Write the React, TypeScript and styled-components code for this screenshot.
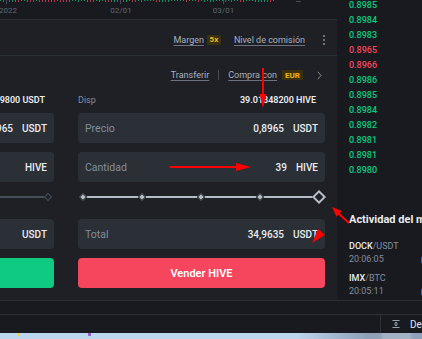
import React from "react";
import styled, { createGlobalStyle } from "styled-components";

const GlobalStyle = createGlobalStyle`
  html, body { margin: 0; padding: 0; background: #181a20; }
  body { font-family: Roboto, "Liberation Sans", Arial, sans-serif; }
  * { box-sizing: border-box; }
`;

const Page = styled.div`
  position: relative;
  width: 422px;
  height: 339px;
  overflow: hidden;
  background: #181a20;
  color: #eaecef;
  display: flex;
  flex-direction: column;
`;

const Main = styled.div`
  display: flex;
  height: 300px;
  flex-shrink: 0;
`;

const LeftCol = styled.div`
  width: 337px;
  flex-shrink: 0;
  display: flex;
  flex-direction: column;
`;

const Axis = styled.div`
  height: 20px;
  border-bottom: 1px solid #2b2f36;
  background: #181a20;
  svg { display: block; }
`;

const Header = styled.div`
  height: 36px;
  border-bottom: 1px solid #2b2f36;
  background: #1e2026;
  display: flex;
  align-items: center;
  justify-content: flex-end;
  padding: 4px 12px 0 0;
  font-size: 9px;
`;

const LinkText = styled.span<{ $gap?: number }>`
  color: #aab0bb;
  text-decoration: underline;
  text-decoration-color: #6b7280;
  text-underline-offset: 2px;
  line-height: 12px;
  white-space: nowrap;
  margin-right: ${(p) => p.$gap ?? 0}px;
`;

const Badge = styled.span<{ $w: number; $gap?: number }>`
  display: inline-flex;
  align-items: center;
  justify-content: center;
  width: ${(p) => p.$w}px;
  height: 10px;
  border-radius: 1px;
  background: #3a300f;
  color: #f0b90b;
  font-size: 8px;
  font-weight: 700;
  margin-right: ${(p) => p.$gap ?? 0}px;
`;

const Kebab = styled.span`
  display: inline-flex;
  flex-direction: column;
  gap: 2px;
  margin-left: 18px;
  i {
    display: block;
    width: 2px;
    height: 2px;
    border-radius: 1px;
    background: #848e9c;
  }
`;

const FormPanel = styled.div`
  flex: 1;
  background: #1e2026;
  padding: 13px 12px 0 0;
  display: flex;
  flex-direction: column;
`;

const TopLinks = styled.div`
  height: 12px;
  display: flex;
  align-items: center;
  justify-content: flex-end;
  padding-right: 3px;
  font-size: 9px;
`;

const VDivider = styled.span`
  width: 1px;
  height: 10px;
  background: #474d57;
  margin: 0 9px 0 9px;
`;

const Chevron = styled.svg`
  margin-left: 14px;
  display: block;
`;

const Columns = styled.div`
  display: flex;
  gap: 24px;
  margin-left: -193px;
  margin-top: 13px;
`;

const OrderColumn = styled.div`
  width: 247px;
  flex-shrink: 0;
  display: flex;
  flex-direction: column;
`;

const DispRow = styled.div`
  height: 12px;
  line-height: 12px;
  display: flex;
  justify-content: space-between;
  padding-right: 9px;
  font-size: 9px;
  span:first-child { color: #848e9c; }
  span:last-child { color: #eaecef; font-weight: 600; white-space: nowrap; }
`;

const InputBox = styled.div<{ $mt: number }>`
  height: 30px;
  margin-top: ${(p) => p.$mt}px;
  background: #2b2f36;
  border-radius: 4px;
  display: flex;
  align-items: center;
  padding: 0 7px;
  white-space: nowrap;
`;

const InputLabel = styled.span`
  color: #848e9c;
  font-size: 10.5px;
`;

const InputValue = styled.span`
  margin-left: auto;
  font-size: 10px;
  font-weight: 500;
  color: #eaecef;
`;

const InputUnit = styled.span`
  margin-left: 9px;
  font-size: 10px;
  font-weight: 500;
  color: #eaecef;
`;

const SliderRow = styled.div`
  height: 16px;
  margin: 7px 6px 0 5px;
  display: flex;
  align-items: center;
`;

const Rail = styled.div<{ $filled: boolean }>`
  position: relative;
  flex: 1;
  height: 2px;
  background: ${(p) => (p.$filled ? "#b7bdc6" : "#474d57")};
`;

type MarkerKind = "dot" | "handle" | "hollow";

const Marker = styled.span<{ $kind: MarkerKind }>`
  position: absolute;
  top: 50%;
  transform: translate(-50%, -50%) rotate(45deg);
  ${(p) =>
    p.$kind === "handle"
      ? `width: 10px; height: 10px; border: 2.5px solid #b7bdc6; background: #1e2026;`
      : p.$kind === "dot"
      ? `width: 6px; height: 6px; background: #b7bdc6; border: 1px solid #1e2026;`
      : `width: 6px; height: 6px; border: 1.5px solid #474d57; background: #1e2026;`}
`;

const ActionButton = styled.div<{ $color: string }>`
  height: 30px;
  margin-top: 9px;
  border-radius: 4px;
  background: ${(p) => p.$color};
  color: #ffffff;
  font-size: 11px;
  font-weight: 600;
  display: flex;
  align-items: center;
  justify-content: center;
`;

const RightCol = styled.div`
  flex: 1;
  min-width: 0;
  display: flex;
  flex-direction: column;
  padding-left: 12px;
  overflow: hidden;
  background: #181a20;
`;

const OrderBook = styled.div`
  height: 181px;
  overflow: hidden;
  flex-shrink: 0;
`;

const BookList = styled.div`
  margin-top: -2px;
`;

const BookRow = styled.div<{ $side: "bid" | "ask" }>`
  height: 15px;
  line-height: 15px;
  font-size: 9px;
  font-weight: 500;
  color: ${(p) => (p.$side === "bid" ? "#0ecb81" : "#f6465d")};
`;

const Activity = styled.div`
  padding-top: 32px;
  display: flex;
  flex-direction: column;
`;

const ActivityTitle = styled.div`
  font-size: 11px;
  font-weight: 700;
  line-height: 14px;
  white-space: nowrap;
  color: #eaecef;
  margin-bottom: 13px;
`;

const ActivityItem = styled.div`
  display: flex;
  margin-bottom: 6px;
`;

const ActivityText = styled.div`
  width: 72px;
  flex-shrink: 0;
  font-size: 9px;
  line-height: 13px;
  b { font-weight: 500; color: #eaecef; }
  em { font-style: normal; color: #848e9c; }
`;

const ActivityTime = styled.div`
  color: #848e9c;
`;

const ActivityMark = styled.span`
  width: 20px;
  height: 8px;
  margin-top: 16px;
  border-radius: 2px;
  background: #2f5bd6;
  flex-shrink: 0;
`;

const StatusBar = styled.div`
  height: 14px;
  flex-shrink: 0;
  border-top: 1px solid #2b2f36;
  background: #181a20;
`;

const FooterBar = styled.div`
  height: 19px;
  flex-shrink: 0;
  border-top: 1px solid #2b2f36;
  background: #181a20;
  display: flex;
`;

const FooterMain = styled.div`
  width: 380px;
  flex-shrink: 0;
`;

const FooterTab = styled.div`
  flex-shrink: 0;
  border-left: 1px solid #2b2f36;
  display: flex;
  align-items: center;
  gap: 10px;
  padding-left: 11px;
  font-size: 10px;
  color: #dfe5f5;
  white-space: nowrap;
`;

const Taskbar = styled.div`
  height: 6px;
  flex-shrink: 0;
  background: linear-gradient(to right, #bcd6ee 0%, #bcd6ee 70%, #8ea1b8 87%, #8ea1b8 90%, #a3b2c5 91%, #a3b2c5 97%, #8ea1b8 98%);
  display: flex;
  align-items: flex-start;
  padding-left: 17px;
  gap: 68px;
`;

const TrayIcon = styled.span<{ $c: string }>`
  width: 3px;
  height: 3px;
  border-radius: 1px;
  background: ${(p) => p.$c};
`;

const Overlay = styled.svg`
  position: absolute;
  left: 0;
  top: 0;
  pointer-events: none;
`;

const bookRows: { v: string; s: "bid" | "ask" }[] = [
  { v: "0.8985", s: "bid" },
  { v: "0.8984", s: "bid" },
  { v: "0.8983", s: "bid" },
  { v: "0.8965", s: "ask" },
  { v: "0.8966", s: "ask" },
  { v: "0.8986", s: "bid" },
  { v: "0.8985", s: "bid" },
  { v: "0.8984", s: "bid" },
  { v: "0.8982", s: "bid" },
  { v: "0.8981", s: "bid" },
  { v: "0.8981", s: "bid" },
  { v: "0.8980", s: "bid" },
  { v: "0.8979", s: "ask" },
];

const candles = Array.from({ length: 92 }, (_, i) => {
  const r = Math.sin(i * 12.9898) * 43758.5453;
  const f = r - Math.floor(r);
  return { x: i * 3, h: 1 + Math.round(f * 1.5), c: f > 0.5 ? "#f6465d" : "#0ecb81" };
});

function AxisStrip() {
  return (
    <svg width="337" height="19" viewBox="0 0 337 19">
      {candles.map((c, i) => (
        <rect key={i} x={c.x} y={0} width={1} height={c.h} fill={c.c} opacity={0.7} />
      ))}
      {[6, 120, 223].map((x) => (
        <line key={x} x1={x + 0.5} y1={0} x2={x + 0.5} y2={4} stroke="#474d57" />
      ))}
      <line x1={296} y1={1.5} x2={301} y2={1.5} stroke="#474d57" />
      <g fontSize="8" fill="#5e6673" textAnchor="middle" fontFamily="Roboto, sans-serif">
        <text x={8} y={13}>2022</text>
        <text x={121} y={13}>02/01</text>
        <text x={223.5} y={13}>03/01</text>
      </g>
    </svg>
  );
}

function Slider({ filled }: { filled: boolean }) {
  const stops = [0, 25, 50, 75, 100];
  return (
    <SliderRow>
      <Rail $filled={filled}>
        {stops.map((s) => (
          <Marker
            key={s}
            $kind={filled ? (s === 100 ? "handle" : "dot") : "hollow"}
            style={{ left: `${s}%` }}
          />
        ))}
      </Rail>
    </SliderRow>
  );
}

type Side = {
  disp: string;
  price: string;
  amount: string;
  total: string;
  button: string;
  color: string;
  filled: boolean;
};

function OrderForm({ side }: { side: Side }) {
  return (
    <OrderColumn>
      <DispRow>
        <span>Disp</span>
        <span>{side.disp}</span>
      </DispRow>
      <InputBox $mt={7}>
        <InputLabel>Precio</InputLabel>
        <InputValue>{side.price}</InputValue>
        <InputUnit>USDT</InputUnit>
      </InputBox>
      <InputBox $mt={9}>
        <InputLabel>Cantidad</InputLabel>
        <InputValue>{side.amount}</InputValue>
        <InputUnit>HIVE</InputUnit>
      </InputBox>
      <Slider filled={side.filled} />
      <InputBox $mt={14}>
        <InputLabel>Total</InputLabel>
        <InputValue>{side.total}</InputValue>
        <InputUnit>USDT</InputUnit>
      </InputBox>
      <ActionButton $color={side.color}>{side.button}</ActionButton>
    </OrderColumn>
  );
}

const buySide: Side = {
  disp: "34.97579800 USDT",
  price: "0,8965",
  amount: "",
  total: "",
  button: "Comprar HIVE",
  color: "#0ecb81",
  filled: false,
};

const sellSide: Side = {
  disp: "39.01848200 HIVE",
  price: "0,8965",
  amount: "39",
  total: "34,9635",
  button: "Vender HIVE",
  color: "#f6465d",
  filled: true,
};

export default function App() {
  return (
    <>
      <GlobalStyle />
      <Page>
        <Main>
          <LeftCol>
            <Axis>
              <AxisStrip />
            </Axis>
            <Header>
              <LinkText $gap={3}>Margen</LinkText>
              <Badge $w={14} $gap={13}>5x</Badge>
              <LinkText>Nivel de comisión</LinkText>
              <Kebab>
                <i />
                <i />
                <i />
              </Kebab>
            </Header>
            <FormPanel>
              <TopLinks>
                <LinkText>Transferir</LinkText>
                <VDivider />
                <LinkText $gap={5}>Compra con</LinkText>
                <Badge $w={21}>EUR</Badge>
                <Chevron width="5" height="9" viewBox="0 0 5 9">
                  <path d="M0.8 0.8 L4 4.5 L0.8 8.2" fill="none" stroke="#848e9c" strokeWidth="1" />
                </Chevron>
              </TopLinks>
              <Columns>
                <OrderForm side={buySide} />
                <OrderForm side={sellSide} />
              </Columns>
            </FormPanel>
          </LeftCol>
          <RightCol>
            <OrderBook>
              <BookList>
                {bookRows.map((r, i) => (
                  <BookRow key={i} $side={r.s}>
                    {r.v}
                  </BookRow>
                ))}
              </BookList>
            </OrderBook>
            <Activity>
              <ActivityTitle>Actividad del mercado</ActivityTitle>
              <ActivityItem>
                <ActivityText>
                  <div>
                    <b>DOCK</b>
                    <em>/USDT</em>
                  </div>
                  <ActivityTime>20:06:05</ActivityTime>
                </ActivityText>
                <ActivityMark />
              </ActivityItem>
              <ActivityItem>
                <ActivityText>
                  <div>
                    <b>IMX</b>
                    <em>/BTC</em>
                  </div>
                  <ActivityTime>20:05:11</ActivityTime>
                </ActivityText>
                <ActivityMark />
              </ActivityItem>
            </Activity>
          </RightCol>
        </Main>
        <StatusBar />
        <FooterBar>
          <FooterMain />
          <FooterTab>
            <svg width="8" height="8" viewBox="0 0 8 8">
              <path d="M0.5 0.5 H7.5 M0.5 7.5 H7.5" stroke="#9aa1ad" strokeWidth="1" />
              <path d="M4 2 V6 M2.5 3.5 L4 2 L5.5 3.5 M2.5 4.5 L4 6 L5.5 4.5" stroke="#9aa1ad" strokeWidth="1" fill="none" />
            </svg>
            <span>Depósito</span>
          </FooterTab>
        </FooterBar>
        <Taskbar>
          <TrayIcon $c="#f2d43a" />
          <TrayIcon $c="#9b4fd0" />
        </Taskbar>
        <Overlay width="422" height="339" viewBox="0 0 422 339">
          <g fill="#ff0000" stroke="#ff0000">
            <line x1={263} y1={68} x2={263} y2={96} strokeWidth={2} />
            <polygon points="259.5,94 266.5,94 263,108" stroke="none" />
            <line x1={170} y1={167} x2={238} y2={167} strokeWidth={2} />
            <polygon points="236,163 236,171 251,167" stroke="none" />
            <line x1={349} y1={223} x2={338} y2={213} strokeWidth={2} />
            <polygon points="342,211 336.5,216.8 332,207" stroke="none" />
            <polygon points="318,229 325,235 312,243" stroke="none" />
          </g>
        </Overlay>
      </Page>
    </>
  );
}
